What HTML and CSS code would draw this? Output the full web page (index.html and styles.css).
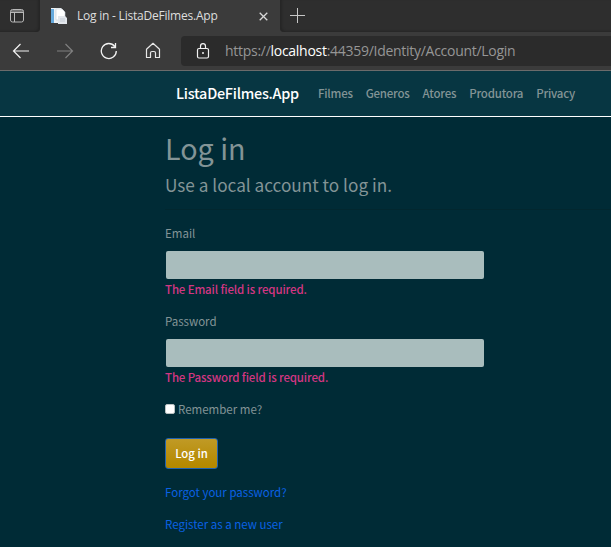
FILE: index.html
```html
<!DOCTYPE html>
<html lang="en">
<head>
<meta charset="utf-8">
<title>Log in - ListaDeFilmes.App</title>
<link rel="stylesheet" href="styles.css">
</head>
<body>
<div class="tabstrip">
  <div class="strip-left">
    <svg class="tab-actions" width="16" height="16" viewBox="0 0 16 16" fill="none" stroke="#b8b8b8"><rect x="1.5" y="1.5" width="13" height="12.5" rx="2"/><path d="M2 3h12M2 4.5h12M5.5 5v9"/></svg>
  </div>
  <div class="tab">
    <svg class="favicon" width="18" height="17" viewBox="0 0 18 17"><path d="M1 0h10l3 3v12H1z" fill="#edf1f4"/><path d="M1 1h3v14H1z" fill="#65a9dc"/><path d="M6 1h6l3 3v8H6z" fill="#fff" stroke="#c8d0d8" stroke-width=".6"/><path d="M8 8h7l2 2v6H8z" fill="#e3e7ec"/><path d="M10 11h5M10 13h5" stroke="#c3cbd4"/></svg>
    <span class="tab-title">Log in - ListaDeFilmes.App</span>
    <svg class="close" width="9" height="9" viewBox="0 0 9 9" stroke="#d8d8d8" stroke-width="1.3"><path d="M.7.7l7.6 7.6M8.3.7L.7 8.3"/></svg>
  </div>
  <div class="strip-right">
    <svg width="15" height="15" viewBox="0 0 15 15" stroke="#c6c6c6"><path d="M7.5 0v15M0 7.5h15"/></svg>
  </div>
</div>
<div class="toolbar">
  <svg class="back" width="17" height="16" viewBox="0 0 17 16" fill="none" stroke="#f2f2f2" stroke-width="1.2"><path d="M8.500 1L1.500 8l7 7M1.500 8H17"/></svg>
  <svg class="forward" width="17" height="16" viewBox="0 0 17 16" fill="none" stroke="#808080" stroke-width="1.2"><path d="M8.500 1l7 7-7 7M0 8h15.500"/></svg>
  <svg class="reload" width="18" height="18" viewBox="0 0 18 18" fill="none" stroke="#f2f2f2" stroke-width="1.3"><path d="M16.300 9A7.500 7.500 0 1 1 14.800 4.500M15.500 1v4.500H11"/></svg>
  <svg class="home" width="16" height="17" viewBox="0 0 16 17" fill="none" stroke="#e8e8e8" stroke-width="1.2" stroke-linejoin="round"><path d="M1.500 7.200L8 1.300l6.500 5.900v8.300h-4v-4.500q0-1.500-1.500-1.500H7q-1.500 0-1.500 1.500v4.500h-4z"/></svg>
  <div class="address">
    <svg width="14" height="16" viewBox="0 0 14 16" fill="none" stroke="#f2f2f2" stroke-width="1.2"><rect x="1.500" y="5.500" width="11" height="9.500" rx="1.500"/><path d="M4.500 5.500V3.200a2.500 2.500 0 0 1 5 0v2.300"/><circle cx="7" cy="10" r="1" fill="#f2f2f2" stroke="none"/></svg>
    <span class="url">https://<b>localhost</b>:44359/Identity/Account/Login</span>
  </div>
</div>
<nav class="navbar">
  <a class="brand">ListaDeFilmes.App</a>
  <a>Filmes</a><a>Generos</a><a>Atores</a><a>Produtora</a><a>Privacy</a>
</nav>
<main>
  <h1>Log in</h1>
  <h4>Use a local account to log in.</h4>
  <hr>
  <form>
    <label for="email">Email</label>
    <input class="field" id="email" type="text">
    <p class="error">The Email field is required.</p>
    <label for="password">Password</label>
    <input class="field" id="password" type="password">
    <p class="error">The Password field is required.</p>
    <label class="remember"><input class="check" type="checkbox"><span>Remember me?</span></label>
    <button type="button">Log in</button>
    <p class="link"><a>Forgot your password?</a></p>
    <p class="link"><a>Register as a new user</a></p>
  </form>
</main>
</body>
</html>
```
FILE: styles.css
```css
* { box-sizing: border-box; }
body {
  margin: 0;
  height: 547px;
  overflow: hidden;
  background: #002b36;
  color: #839496;
  font: 11.5px/21px "Noto Sans CJK JP", sans-serif;
}
svg { display: block; flex: none; }
.tabstrip { display: flex; height: 32px; background: #3b3b3b; }
.strip-left, .strip-right { background: #2e2e2e; height: 32px; }
.strip-left { width: 40px; padding: 8px 0 0 9px; border-bottom-right-radius: 4px; box-shadow: inset -2px -1px 2px #262626; }
.strip-right { flex: 1; padding: 8px 0 0 10px; border-bottom-left-radius: 4px; box-shadow: inset 2px -1px 2px #262626; }
.tab { display: flex; align-items: center; width: 240px; padding-left: 10px; }
.tab-title {
  width: 190px;
  padding-left: 9px;
  color: #dedede;
  font: 12px/20px "Open Sans", sans-serif;
  letter-spacing: -0.22px;
  white-space: nowrap;
}
.close { margin-left: 1px; }
.toolbar { display: flex; align-items: center; height: 39px; padding: 0 0 1px 12px; background: #3b3b3b; border-bottom: 1px solid #6b6b6b; }
.forward { margin-left: 28px; }
.reload { margin-left: 26px; }
.home { margin-left: 27px; }
.address { display: flex; align-items: center; flex: 1; height: 30px; margin-left: 20px; padding-left: 15px; background: #2b2b2b; border-radius: 4px 0 0 4px; }
.url { margin-left: 15px; color: #969696; font: 14px/20px "Open Sans", sans-serif; letter-spacing: -0.28px; white-space: nowrap; }
.url b { color: #fff; font-weight: 400; }
.navbar { display: flex; align-items: center; height: 46px; padding-left: 176px; background: #073642; border-bottom: 1px solid #fff; font-weight: 500; white-space: nowrap; }
.navbar a { color: #839496; margin-right: 13px; letter-spacing: -0.22px; }
.navbar .brand { padding-bottom: 2px; color: #fff; font-size: 14.4px; margin-right: 19px; letter-spacing: -0.25px; }
main { width: 319px; margin-left: 165px; padding-top: 12px; }
h1, h4, p { margin: 0; font-weight: 400; }
h1 { font-size: 28.7px; line-height: 38px; }
h4 { margin-top: 7px; font-size: 17.2px; line-height: 22px; }
hr { width: 446px; height: 1px; margin: 13px 0 13px; border: 0; background: #02272f; }
label { display: block; }
.field { display: block; width: 318px; height: 28px; margin: 7px 0 0 1px; border: 0; border-radius: 2px; background: #a9bdbd; }
.error { margin-bottom: 11px; color: #d33682; font-weight: 500; letter-spacing: -0.15px; }
.remember { display: flex; align-items: center; }
.check { appearance: none; width: 10px; height: 10px; margin: 0 3px 2px 0; background: #fff; border: 1px solid #b9c0c1; border-radius: 2px; }
button { display: block; width: 53px; height: 31px; margin: 18px 0 13px; padding: 0 0 1px; border: 1px solid #2263b0; border-radius: 3px; background: linear-gradient(#c09a26, #b58900 90%); color: #fff; font: 500 11.4px/21px "Noto Sans CJK JP", sans-serif; }
.link { margin-bottom: 11px; color: #0a62e4; }
```
